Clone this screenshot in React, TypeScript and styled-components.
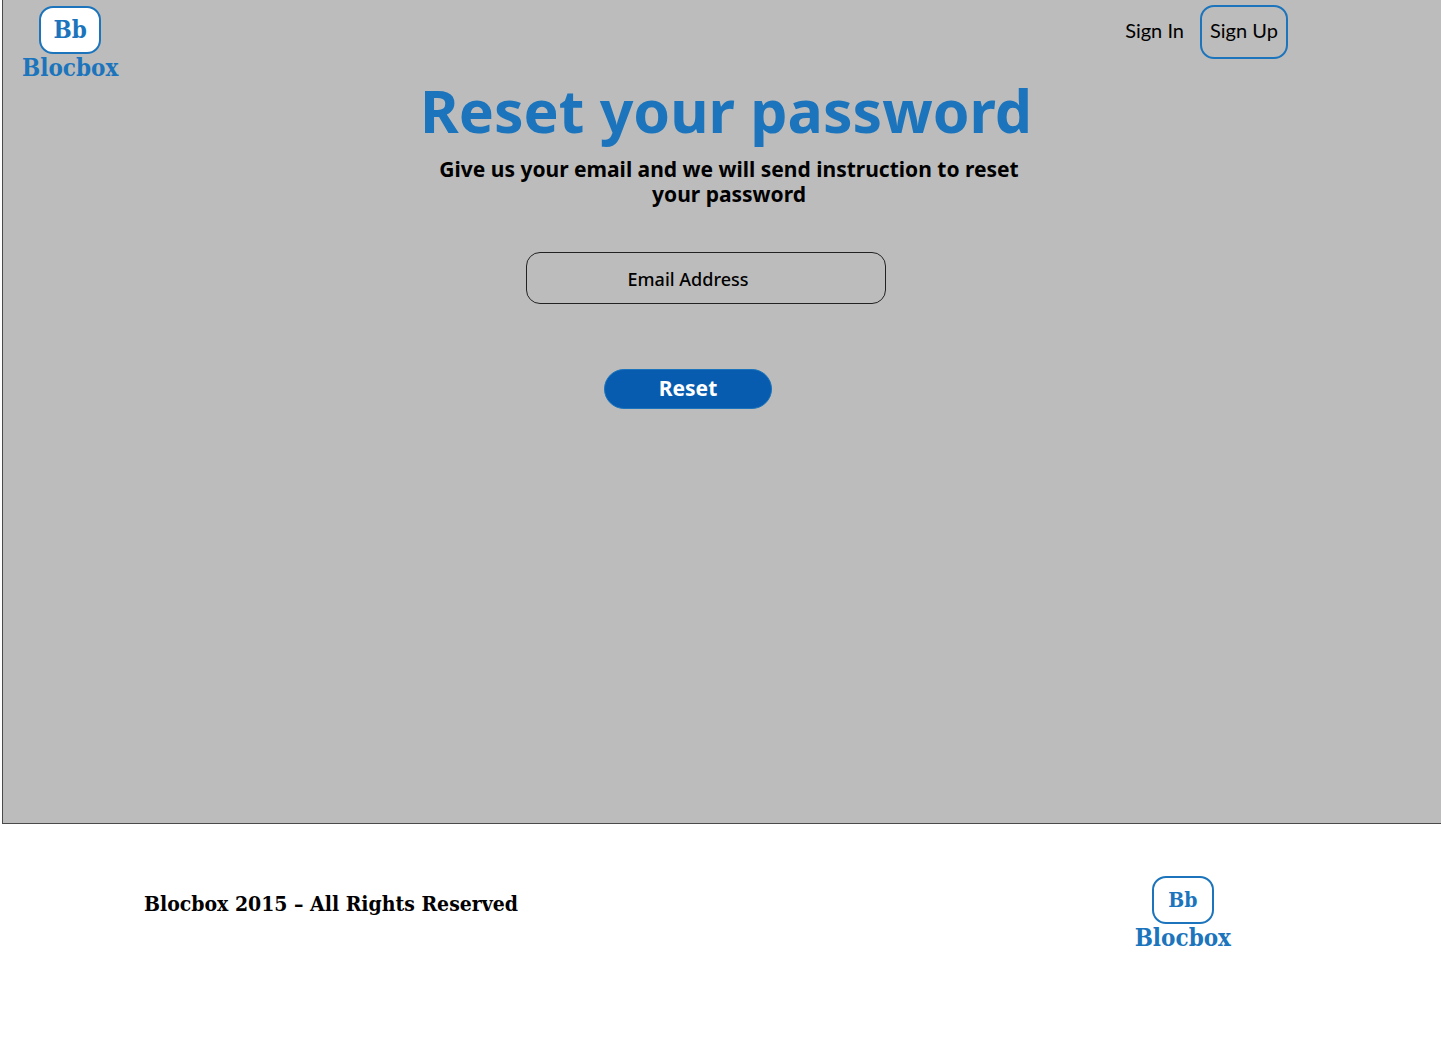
import React from "react";
import styled, { createGlobalStyle } from "styled-components";

const blue = "#1c75bc";
const sans = '"Noto Sans", "Open Sans", sans-serif';
const serif = '"DejaVu Serif Condensed", "Liberation Serif", serif';

const GlobalStyle = createGlobalStyle`
  *, *::before, *::after { box-sizing: border-box; }
  body { margin: 0; background: #fff; color: #000; font-family: ${sans}; }
`;

const Screen = styled.div`
  display: flex;
  flex-direction: column;
  min-height: 824px;
  margin-left: 2px;
  border-left: 1px solid #4a4a4a;
  border-bottom: 1px solid #4a4a4a;
  background: #bcbcbc;
`;

const Header = styled.header`
  display: flex;
  justify-content: space-between;
  align-items: flex-start;
  padding: 5px 153px 0 19px;
`;

const LogoLink = styled.a`
  display: flex;
  flex-direction: column;
  align-items: center;
  padding-top: 1px;
  color: ${blue};
  font-family: ${serif};
  font-weight: 700;
  text-decoration: none;
`;

const LogoMark = styled.span<{ $size: number }>`
  display: flex;
  align-items: center;
  justify-content: center;
  width: 62px;
  height: 48px;
  border: 2px solid ${blue};
  border-radius: 14px;
  background: #fff;
  font-size: ${(p) => p.$size}px;
  line-height: 28px;
`;

const LogoName = styled.span`
  font-size: 24px;
  line-height: 28px;
`;

const Nav = styled.nav`
  display: flex;
  align-items: center;
  gap: 14px;
`;

const NavLink = styled.a<{ $boxed?: boolean }>`
  display: flex;
  align-items: center;
  justify-content: center;
  width: ${(p) => (p.$boxed ? "88px" : "auto")};
  height: 54px;
  padding-bottom: 4px;
  border: 2px solid ${(p) => (p.$boxed ? blue : "transparent")};
  border-radius: 14px;
  color: #000;
  font-family: Lato, ${sans};
  font-size: 20px;
  line-height: 28px;
  text-decoration: none;
`;

const Main = styled.main`
  display: flex;
  flex-direction: column;
  align-items: center;
`;

const Title = styled.h1`
  margin: 0;
  padding-left: 8px;
  color: ${blue};
  font-size: 59px;
  line-height: 56px;
  font-weight: 700;
`;

const Intro = styled.p`
  width: 600px;
  max-width: 100%;
  margin: 19px 0 0;
  padding-left: 14px;
  font-size: 21px;
  line-height: 25px;
  font-weight: 700;
  text-align: center;
`;

const Form = styled.form`
  display: flex;
  flex-direction: column;
  align-items: center;
  gap: 65px;
  width: 392px;
  max-width: 100%;
  margin-top: 45px;
  padding-right: 32px;
`;

const EmailInput = styled.input`
  width: 100%;
  height: 52px;
  padding: 2px 36px 0 0;
  border: 1px solid #222;
  border-radius: 14px;
  background: transparent;
  color: #000;
  font-family: ${sans};
  font-size: 18px;
  font-weight: 500;
  text-align: center;
  &::placeholder { color: #000; opacity: 1; }
`;

const ResetButton = styled.button`
  width: 168px;
  height: 40px;
  margin-right: 36px;
  padding: 0 0 2px;
  border: 1px solid ${blue};
  border-radius: 20px;
  background: #085cb0;
  color: #fff;
  font-family: ${sans};
  font-size: 21px;
  line-height: 25px;
  font-weight: 700;
  cursor: pointer;
`;

const Footer = styled.footer`
  display: flex;
  justify-content: space-between;
  align-items: flex-start;
  padding: 51px 210px 88px 144px;
`;

const Copyright = styled.p`
  margin: 15px 0 0;
  font-family: ${serif};
  font-size: 21px;
  line-height: 28px;
  font-weight: 700;
`;

function Logo({ size }: { size: number }) {
  return (
    <LogoLink href="#">
      <LogoMark $size={size}>Bb</LogoMark>
      <LogoName>Blocbox</LogoName>
    </LogoLink>
  );
}

export default function App() {
  return (
    <>
      <GlobalStyle />
      <Screen>
        <Header>
          <Logo size={24} />
          <Nav>
            <NavLink href="#">Sign In</NavLink>
            <NavLink href="#" $boxed>Sign Up</NavLink>
          </Nav>
        </Header>
        <Main>
          <Title>Reset your password</Title>
          <Intro>Give us your email and we will send instruction to reset your password</Intro>
          <Form onSubmit={(e) => e.preventDefault()}>
            <EmailInput type="email" aria-label="Email Address" placeholder="Email Address" />
            <ResetButton type="submit">Reset</ResetButton>
          </Form>
        </Main>
      </Screen>
      <Footer>
        <Copyright>Blocbox 2015 – All Rights Reserved</Copyright>
        <Logo size={21} />
      </Footer>
    </>
  );
}
